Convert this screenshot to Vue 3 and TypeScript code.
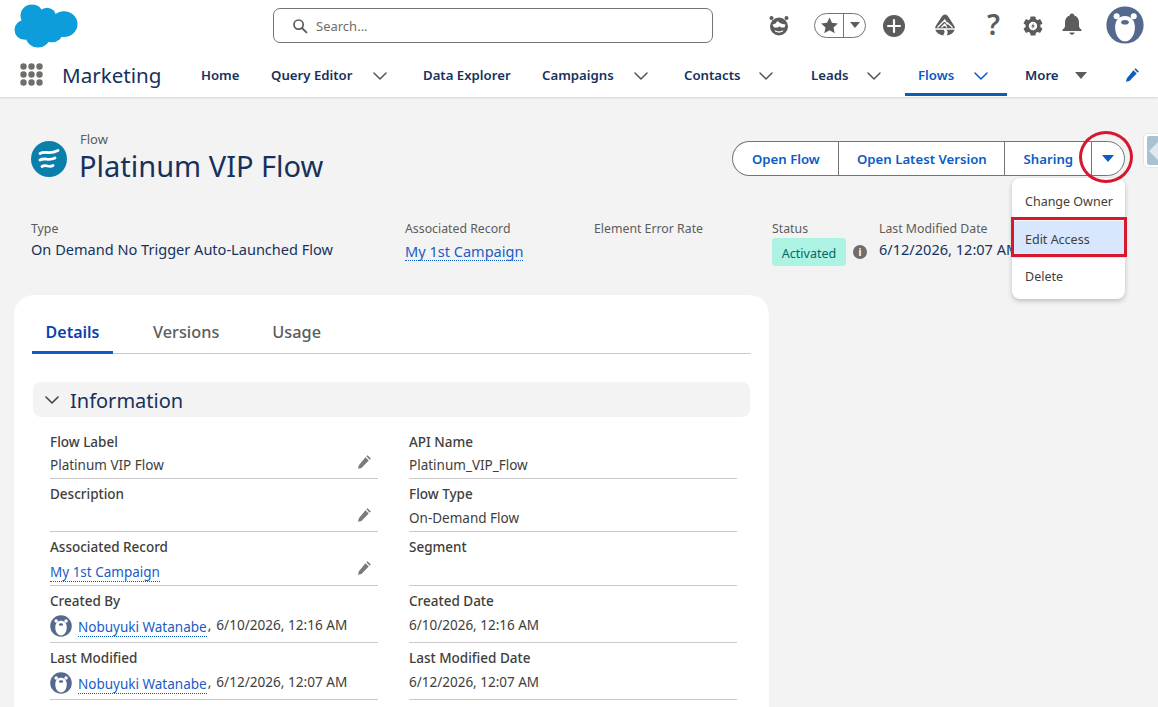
<script setup lang="ts">
type Nav = { label: string; cls: string; chev?: string; tri?: boolean; active?: boolean }
const nav: Nav[] = [
  { label: 'Home', cls: 'n-home' },
  { label: 'Query Editor', cls: 'n-query', chev: 'c-query' },
  { label: 'Data Explorer', cls: 'n-data' },
  { label: 'Campaigns', cls: 'n-camp', chev: 'c-camp' },
  { label: 'Contacts', cls: 'n-cont', chev: 'c-cont' },
  { label: 'Leads', cls: 'n-leads', chev: 'c-leads' },
  { label: 'Flows', cls: 'n-flows', chev: 'c-flows', active: true },
  { label: 'More', cls: 'n-more', tri: true },
]
type Cell = { label: string; value?: string; link?: boolean; edit?: boolean; user?: string; h: string }
const rows: Cell[][] = [
  [
    { label: 'Flow Label', value: 'Platinum VIP Flow', edit: true, h: 'r1' },
    { label: 'API Name', value: 'Platinum_VIP_Flow', h: 'r1' },
  ],
  [
    { label: 'Description', edit: true, h: 'r2' },
    { label: 'Flow Type', value: 'On-Demand Flow', h: 'r2' },
  ],
  [
    { label: 'Associated Record', value: 'My 1st Campaign', link: true, edit: true, h: 'r3' },
    { label: 'Segment', h: 'r3' },
  ],
  [
    { label: 'Created By', user: '6/10/2026, 12:16 AM', h: 'r4' },
    { label: 'Created Date', value: '6/10/2026, 12:16 AM', h: 'r4' },
  ],
  [
    { label: 'Last Modified', user: '6/12/2026, 12:07 AM', h: 'r4' },
    { label: 'Last Modified Date', value: '6/12/2026, 12:07 AM', h: 'r4' },
  ],
]
const teeth = [0, 60, 120, 180, 240, 300]
</script>

<template>
  <div class="page">
    <header class="header">
      <div class="top">
        <svg class="logo" viewBox="0 0 64 46" preserveAspectRatio="none" aria-hidden="true">
          <g fill="#0d9dda">
            <circle cx="18" cy="12" r="11.5" />
            <circle cx="33" cy="13" r="9" />
            <circle cx="50" cy="21" r="13.5" />
            <circle cx="11" cy="27" r="10.5" />
            <circle cx="24" cy="33" r="12.5" />
            <circle cx="38" cy="29" r="11" />
            <rect x="12" y="12" width="36" height="22" />
          </g>
        </svg>
        <div class="search">
          <svg class="search-ic" viewBox="0 0 16 16"><circle cx="6.6" cy="6.6" r="4.6" fill="none" stroke="#5c5c5c" stroke-width="1.7" /><path d="M10 10l4.4 4.4" stroke="#5c5c5c" stroke-width="1.9" stroke-linecap="round" /></svg>
          <span>Search...</span>
        </div>
        <div class="tools">
          <svg class="t-ein" viewBox="0 0 22 22"><circle cx="11" cy="12.500" r="9" fill="#5c5c5c" /><circle cx="3.500" cy="4" r="2" fill="#5c5c5c" /><circle cx="18.500" cy="4" r="2" fill="#5c5c5c" /><path d="M4.500 10.500c3-.5 4-2 5-3.500 1 1.500 4 3 8 3.500l-1 3h-3.500l-1.500-1.300-1.500 1.300H6z" fill="#fff" /><path d="M7.500 17q3.500 2 7 0" stroke="#fff" stroke-width="1.400" fill="none" stroke-linecap="round" /></svg>
          <div class="fav">
            <span class="fav-star"><svg viewBox="0 0 20 20"><path d="M10 1.500l2.600 5.700 6.200.7-4.600 4.200 1.300 6.100L10 15.100l-5.500 3.100 1.300-6.100L1.200 7.900l6.200-.7z" fill="#5c5c5c" /></svg></span>
            <span class="fav-drop"><i class="tri gray small"></i></span>
          </div>
          <svg class="t-plus" viewBox="0 0 24 24"><circle cx="12" cy="12" r="12" fill="#5c5c5c" /><path d="M12 5.500v13M5.500 12h13" stroke="#fff" stroke-width="2.400" stroke-linecap="round" /></svg>
          <svg class="t-trail" viewBox="0 0 24 24">
            <path d="M12 1.500c1.500 0 2.500 1 3.500 2.500l5.500 8.500c.6 1 .9 2 .9 2.800H2.100c0-.8.3-1.800.9-2.800L8.500 4C9.500 2.500 10.500 1.500 12 1.500z" fill="#5c5c5c" />
            <path d="M4.500 14.500l7.300-7.500 2.700 4.500M8.500 14.500l3.300-3.500 2 3.500M14 9.500l5.500 5" fill="none" stroke="#fff" stroke-width="1.300" />
            <path d="M2.300 16.800h8.400l1 2-1.500 3.700c-4-.4-6.900-2.700-7.900-5.700zM13.300 16.800h8.400c-1 3-3.700 5.300-7.700 5.700l.8-3.700z" fill="#5c5c5c" />
          </svg>
          <span class="t-help">?</span>
          <svg class="t-gear" viewBox="0 0 24 24">
            <circle cx="12" cy="12" r="9" fill="#5c5c5c" />
            <rect v-for="t in teeth" :key="t" x="8.800" y="0.500" width="6.400" height="6" rx="1" fill="#5c5c5c" :transform="`rotate(${t} 12 12)`" />
            <circle cx="12" cy="12" r="5" fill="#fff" />
            <path d="M13 8.500l-3.300 4.200h2L11 15.500l3.300-4.200h-2z" fill="#5c5c5c" />
          </svg>
          <svg class="t-bell" viewBox="0 0 24 24"><path d="M12 1.500c1.300 0 2.200.9 2.300 2 3 1 4.700 3.600 4.700 7v3.500c0 1.600 1 2.500 2.300 3.500.7.600.5 1.500-.5 1.500H3.200c-1 0-1.200-.9-.5-1.500C4 16.500 5 15.600 5 14v-3.500c0-3.400 1.700-6 4.700-7 .1-1.100 1-2 2.300-2z" fill="#5c5c5c" /><path d="M9.500 20.500h5c0 1.300-1.100 2.200-2.500 2.200s-2.500-.9-2.500-2.200z" fill="#5c5c5c" /></svg>
          <svg class="t-avatar" viewBox="0 0 100 100">
            <circle cx="50" cy="50" r="49" fill="#54698d" />
            <circle cx="28" cy="27" r="8" fill="#fff" /><circle cx="73" cy="27" r="8" fill="#fff" />
            <path d="M50 26c-15 0-25 11-26 27-1 22 11 40 26 40s27-18 26-40c-1-16-11-27-26-27z" fill="#fff" />
            <ellipse cx="50" cy="43" rx="10" ry="6" fill="#54698d" />
          </svg>
        </div>
      </div>
      <nav class="nav">
        <svg class="waffle" viewBox="0 0 23 23"><g fill="#706e6b"><circle cx="3.500" cy="3.500" r="3.200" /><circle cx="11.500" cy="3.500" r="3.200" /><circle cx="19.500" cy="3.500" r="3.200" /><circle cx="3.500" cy="11.500" r="3.200" /><circle cx="11.500" cy="11.500" r="3.200" /><circle cx="19.500" cy="11.500" r="3.200" /><circle cx="3.500" cy="19.500" r="3.200" /><circle cx="11.500" cy="19.500" r="3.200" /><circle cx="19.500" cy="19.500" r="3.200" /></g></svg>
        <span class="app">Marketing</span>
        <div v-for="n in nav" :key="n.label" class="nav-item" :class="[n.cls, { active: n.active }]">
          <span>{{ n.label }}</span>
          <svg v-if="n.chev" class="chev" :class="n.chev" viewBox="0 0 14 8"><path d="M1 1l6 6 6-6" fill="none" stroke-width="1.500" stroke-linecap="round" stroke-linejoin="round" /></svg>
          <i v-if="n.tri" class="tri gray nav-tri"></i>
        </div>
        <svg class="nav-pencil" viewBox="0 0 16 16"><path d="M11.300 1.200l3.500 3.500-1.300 1.300L10 2.500zM9 3.500L12.500 7l-7.800 7.800L1 15.800l1-3.900z" fill="#0b5cc4" /></svg>
      </nav>
    </header>

    <section class="record-head">
      <div class="title-row">
        <svg class="flow-ic" viewBox="0 0 36 36">
          <circle cx="18" cy="18" r="18" fill="#0b7fab" />
          <path d="M9 12.500c5-3 9 1.500 18-3M9 19c5-3 8 1.500 15-2M11 25.500c4-2.500 7 1.500 11-1" fill="none" stroke="#fff" stroke-width="2.800" stroke-linecap="round" />
        </svg>
        <div class="titles">
          <div class="obj">Flow</div>
          <h1>Platinum VIP Flow</h1>
        </div>
        <div class="btns">
          <button class="b">Open Flow</button>
          <button class="b b2">Open Latest Version</button>
          <button class="b b3">Sharing</button>
          <button class="b b4"><i class="tri blue"></i></button>
        </div>
      </div>
      <div class="highlights">
        <div><div class="hl">Type</div><div class="hv">On Demand No Trigger Auto-Launched Flow</div></div>
        <div><div class="hl">Associated Record</div><a class="hv link">My 1st Campaign</a></div>
        <div><div class="hl">Element Error Rate</div></div>
        <div>
          <div class="hl">Status</div>
          <div class="status"><span class="pill">Activated</span><span class="info">i</span></div>
        </div>
        <div class="last-col"><div class="hl">Last Modified Date</div><div class="hv">6/12/2026, 12:07 AM</div></div>
      </div>
    </section>

    <section class="card">
      <div class="tabs">
        <span class="tab on">Details</span>
        <span class="tab t2">Versions</span>
        <span class="tab t3">Usage</span>
      </div>
      <div class="section-bar">
        <svg viewBox="0 0 14 8"><path d="M1 1l6 6 6-6" fill="none" stroke="#444" stroke-width="1.600" stroke-linecap="round" stroke-linejoin="round" /></svg>
        <span class="sec-title">Information</span>
      </div>
      <div class="fields">
        <template v-for="(row, i) in rows" :key="i">
          <div v-for="c in row" :key="c.label" class="field" :class="c.h">
            <div class="f-label">{{ c.label }}</div>
            <div v-if="c.user" class="f-user">
              <svg class="mini" viewBox="0 0 100 100">
                <circle cx="50" cy="50" r="49" fill="#54698d" />
                <circle cx="28" cy="27" r="8" fill="#fff" /><circle cx="73" cy="27" r="8" fill="#fff" />
                <path d="M50 26c-15 0-25 11-26 27-1 22 11 40 26 40s27-18 26-40c-1-16-11-27-26-27z" fill="#fff" />
                <ellipse cx="50" cy="43" rx="10" ry="6" fill="#54698d" />
              </svg>
              <a class="link">Nobuyuki Watanabe</a><span class="comma">,</span><span>{{ c.user }}</span>
            </div>
            <a v-else-if="c.link" class="f-link link">{{ c.value }}</a>
            <div v-else class="f-value">{{ c.value }}</div>
            <svg v-if="c.edit" class="edit" viewBox="0 0 16 16"><path d="M11.300 1.200l3.500 3.500-1.300 1.300L10 2.500zM9 3.500L12.500 7l-7.800 7.800L1 15.800l1-3.900z" fill="#7a7a7a" /></svg>
          </div>
        </template>
      </div>
    </section>

    <div class="panel-toggle"><span class="pt-inner"><i></i></span></div>

    <div class="menu">
      <div class="mi">Change Owner</div>
      <div class="mi sel">Edit Access</div>
      <div class="mi">Delete</div>
    </div>
    <div class="red-rect"></div>
    <div class="red-circle"></div>
  </div>
</template>

<style>
html, body { margin: 0; background: #f3f3f3; overflow: hidden; }
</style>

<style scoped>
.page {
  position: relative;
  width: 1158px;
  height: 707px;
  overflow: hidden;
  background: #f3f3f3;
  font-family: "Noto Sans", "Open Sans", sans-serif;
  font-size: 13px;
  color: #181818;
}
.header { background: #fff; height: 97px; box-shadow: 0 1px 2px rgba(0,0,0,.12); position: relative; }
.top { display: flex; align-items: flex-start; height: 52px; padding-left: 14px; }
.logo { width: 64px; height: 44px; margin-top: 4px; flex: none; }
.search {
  margin: 8px 0 0 195px; width: 440px; height: 35px; box-sizing: border-box;
  border: 1px solid #747474; border-radius: 7px; display: flex; align-items: center;
  padding-left: 18px; gap: 8px; color: #706e6b; font-size: 13px;
}
.search-ic { width: 16px; height: 16px; }
.tools { position: relative; flex: 1; display: flex; align-items: center; height: 52px; }
.t-ein { width: 22px; height: 22px; margin: -3px 0 0 55px; flex: none; }
.fav { margin: -2px 0 0 24px; width: 52px; height: 25px; box-sizing: border-box; border: 1px solid #747474; border-radius: 13px; display: flex; flex: none; }
.fav-star { width: 28px; border-right: 1px solid #747474; display: flex; align-items: center; justify-content: center; }
.fav-star svg { width: 19px; height: 19px; }
.fav-drop { flex: 1; display: flex; align-items: center; justify-content: center; }
.t-plus { width: 22px; height: 22px; margin: -1px 0 0 17px; flex: none; }
.t-trail { width: 24px; height: 24px; margin: -2px 0 0 28px; flex: none; }
.t-help { width: 17px; margin: -4px 0 0 28px; font-size: 28px; font-weight: 600; color: #5c5c5c; line-height: 28px; text-align: center; flex: none; }
.t-gear { width: 20px; height: 20px; margin: -1px 0 0 21px; flex: none; }
.t-bell { width: 24px; height: 24px; margin: -4px 0 0 17px; flex: none; }
.t-avatar { width: 38px; height: 38px; margin: -2px 0 0 22px; flex: none; }

.nav { position: relative; height: 45px; }
.waffle { position: absolute; left: 20px; top: 11px; width: 23px; height: 23px; }
.app { position: absolute; left: 62px; top: 7px; font-size: 20.600px; line-height: 32px; color: #16325c; }
.nav-item { position: absolute; top: 0; height: 45px; display: flex; align-items: center; font-weight: 600; color: #16325c; font-size: 13.200px; box-sizing: border-box; white-space: nowrap; }
.n-home { left: 201px; } .n-query { left: 271px; } .n-data { left: 423px; } .n-camp { left: 542px; }
.n-cont { left: 684px; } .n-leads { left: 811px; } .n-flows { left: 905px; width: 102px; padding-left: 13px; color: #0b5cc4; border-bottom: 3px solid #0b5cb5; height: 44px; padding-top: 4px; }
.n-more { left: 1025px; }
.chev { position: absolute; top: 20px; width: 14px; height: 8px; stroke: #555; }
.c-query { left: 102px; } .c-camp { left: 92px; } .c-cont { left: 75px; } .c-leads { left: 56px; }
.c-flows { left: 69px; stroke: #0b5cc4; }
.tri { display: block; width: 0; height: 0; border-left: 6px solid transparent; border-right: 6px solid transparent; border-top: 7px solid #5c5c5c; }
.tri.small { border-left-width: 5px; border-right-width: 5px; border-top-width: 6px; }
.tri.blue { border-top-color: #0b5cc4; }
.nav-tri { position: absolute; left: 50px; top: 20px; }
.nav-pencil { position: absolute; left: 1125px; top: 15px; width: 15px; height: 15px; }

.record-head { padding: 0 0 0 31px; }
.title-row { display: flex; align-items: flex-start; height: 110px; }
.flow-ic { width: 36px; height: 36px; margin-top: 44px; flex: none; }
.titles { margin: 34px 0 0 13px; }
.obj { font-size: 13px; line-height: 17px; color: #5c5c5c; }
h1 { margin: -1px 0 0 -1px; font-size: 29px; line-height: 38px; font-weight: 400; color: #16325c; white-space: nowrap; }
.btns { margin: 44px 0 0 409px; display: flex; height: 35px; box-sizing: border-box; }
.b { height: 35px; box-sizing: border-box; border: 1px solid #747474; border-right: 0; background: #fff; color: #0b5cc4; font: 600 13.200px "Noto Sans", sans-serif; padding: 0; margin: 0; flex: none; }
.b:nth-child(1) { width: 106px; border-radius: 18px 0 0 18px; }
.b2 { width: 166px; }
.b3 { width: 87px; }
.b4 { width: 34px; border-right: 1px solid #747474; border-radius: 0 18px 18px 0; display: flex; align-items: center; justify-content: center; }

.highlights { display: grid; grid-template-columns: 374px 189px 178px 107px 280px; height: 74px; margin-top: 14px; }
.hl { font-size: 12.300px; line-height: 16px; color: #5c5c5c; white-space: nowrap; }
.hv { display: block; font-size: 14.550px; line-height: 20px; color: #16325c; margin-top: 2px; white-space: nowrap; }
.link { color: #1a5cc8; text-decoration: none; border-bottom: 1px dotted #0b5cc4; }
a.hv { display: inline-block; line-height: 18px; margin-top: 5px; color: #1a5cc8; }
.status { display: flex; align-items: center; margin-top: 1px; }
.pill { background: #acf3e4; color: #056764; font-size: 12.500px; width: 74px; height: 28px; padding-top: 2px; box-sizing: border-box; display: flex; align-items: center; justify-content: center; border-radius: 3px; }
.info { width: 14px; height: 14px; border-radius: 50%; background: #706e6b; color: #fff; font: 700 10px/14px "Noto Sans", sans-serif; text-align: center; margin-left: 7px; }

.card { margin-left: 14px; width: 755px; height: 430px; background: #fff; border-radius: 20px; padding: 17px 18px 0; box-sizing: border-box; }
.tabs { position: relative; display: flex; height: 41px; width: 719px; border-bottom: 1px solid #c9c9c9; box-sizing: content-box; }
.tab { font-size: 16.300px; line-height: 40px; font-weight: 500; color: #5c5c5c; }
.tab.on { width: 81px; text-align: center; color: #0b3fae; font-weight: 600; font-size: 16px; border-bottom: 3px solid #0b5cc4; height: 39px; line-height: 40px; }
.t2 { margin-left: 40px; } .t3 { margin-left: 53px; }
.section-bar { margin: 28px 0 0 1px; width: 717px; height: 35px; background: #f3f3f3; border-radius: 8px; display: flex; align-items: center; font-size: 20px; color: #16325c; }
.sec-title { padding-top: 2px; }
.section-bar svg { width: 14px; height: 8px; margin: 1px 11px 0 12px; }
.fields { display: grid; grid-template-columns: 328px 328px; column-gap: 31px; margin: 15px 0 0 18px; }
.field { position: relative; border-bottom: 1px solid #c9c9c9; box-sizing: border-box; }
.r1 { height: 47px; } .r2 { height: 53px; } .r3 { height: 54px; } .r4 { height: 57px; }
.f-label { font-size: 13.500px; font-weight: 500; line-height: 18px; color: #3e3e3c; margin-top: 1px; }
.r2 .f-label { margin-top: 6px; } .r3 .f-label { margin-top: 6px; } .r4 .f-label { margin-top: 6px; }
.f-value { font-size: 13.500px; line-height: 18px; color: #3e3e3c; margin-top: 5px; }
.r2 .f-value { margin-top: 6px; }
.f-link { display: inline-block; font-size: 13.500px; margin-top: 8px; line-height: 17px; }
.r4 .f-value { margin-top: 6px; }
.f-user { display: flex; align-items: center; height: 24px; margin-top: 2px; font-size: 13.600px; color: #3e3e3c; white-space: nowrap; }
.mini { width: 22px; height: 22px; margin: 4px 6px 0 0; flex: none; }
.f-user .link { line-height: 17px; margin-top: 7px; font-size: 13.500px; }
.comma { margin-right: 5px; margin-left: 1px; }
.edit { position: absolute; right: 6px; top: 22px; width: 15px; height: 15px; }
.r2 .edit { top: 28px; } .r3 .edit { top: 28px; }

.panel-toggle { position: absolute; left: 1143px; top: 133px; width: 20px; height: 35px; box-sizing: border-box; background: #fff; border: 1px solid #e5e5e5; border-radius: 5px 0 0 5px; padding: 2px 3px; }
.pt-inner { display: block; width: 100%; height: 29px; background: #a8c2d3; border-radius: 2px; position: relative; overflow: hidden; }
.pt-inner i { position: absolute; left: 2px; top: 5px; width: 0; height: 0; border-top: 10px solid transparent; border-bottom: 10px solid transparent; border-right: 10px solid #dfe8ee; }

.menu { position: absolute; left: 1012px; top: 178px; width: 113px; height: 121px; box-sizing: border-box; padding-top: 5px; background: #fff; border-radius: 8px; box-shadow: 0 2px 5px rgba(0,0,0,.22); font-size: 12.500px; color: #3e3e3c; }
.mi { height: 37.500px; line-height: 37.500px; padding-left: 13px; white-space: nowrap; }
.mi.sel { background: #d8e6fe; }
.red-rect { position: absolute; left: 1011px; top: 217px; width: 116px; height: 40px; box-sizing: border-box; border: 3px solid #d6172e; }
.red-circle { position: absolute; left: 1079px; top: 131px; width: 54px; height: 52px; box-sizing: border-box; border: 3px solid #d6172e; border-radius: 50%; }
</style>
